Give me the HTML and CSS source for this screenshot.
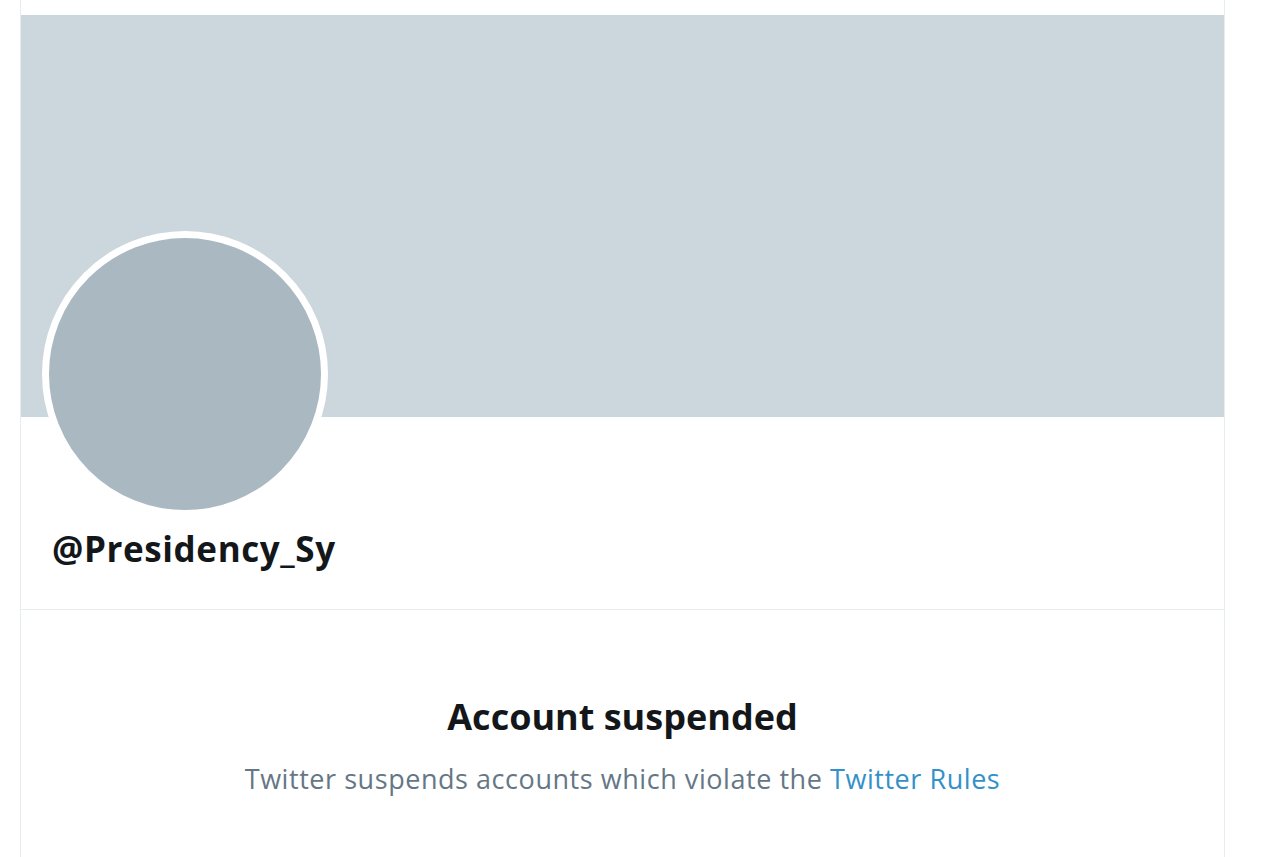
FILE: index.html
```html
<!DOCTYPE html>
<html lang="en">
<head>
  <meta charset="UTF-8" />
  <meta name="viewport" content="width=device-width, initial-scale=1.0" />
  <title>@Presidency_Sy</title>
  <link rel="stylesheet" href="styles.css">
</head>
<body>
  <div class="column">
    <div class="banner"></div>
    <div class="profile">
      <div class="avatar"></div>
      <div class="handle">@Presidency_Sy</div>
    </div>
    <div class="suspended">
      <h2>Account suspended</h2>
      <p>Twitter suspends accounts which violate the <a href="#">Twitter Rules</a></p>
    </div>
  </div>
</body>
</html>
```

FILE: styles.css
```css
body {
  font-family: "Open Sans", "Noto Sans", sans-serif;
  background: #fff;
  margin: 0;
  padding: 0;
  color: #14171a;
  overflow: hidden;
}
.column {
  margin-left: 20px;
  width: 1205px;
  height: 857px;
  border-left: 1px solid #e6ecf0;
  border-right: 1px solid #e6ecf0;
  padding-top: 15px;
  box-sizing: border-box;
}
.banner {
  height: 402px;
  background: #ccd6dd;
}
.profile {
  display: flow-root;
  padding: 0 0 0 21px;
  border-bottom: 1px solid #e6ecf0;
  height: 192px;
}
.avatar {
  width: 272px;
  height: 272px;
  margin-top: -186px;
  border-radius: 50%;
  background: #aab8c2;
  border: 7px solid #fff;
}
.handle {
  font-weight: 700;
  font-size: 35px;
  line-height: 40px;
  margin: 12px 0 0 10px;
  letter-spacing: 0.6px;
}
.suspended {
  text-align: center;
  padding-top: 85px;
}
.suspended h2 {
  margin: 0;
  font-size: 36px;
  line-height: 44px;
  font-weight: 700;
}
.suspended p {
  margin: 23px 0 0;
  font-size: 27px;
  line-height: 34px;
  letter-spacing: 0.55px;
  color: #657786;
}
.suspended a {
  color: #3391c9;
  text-decoration: none;
}
```
